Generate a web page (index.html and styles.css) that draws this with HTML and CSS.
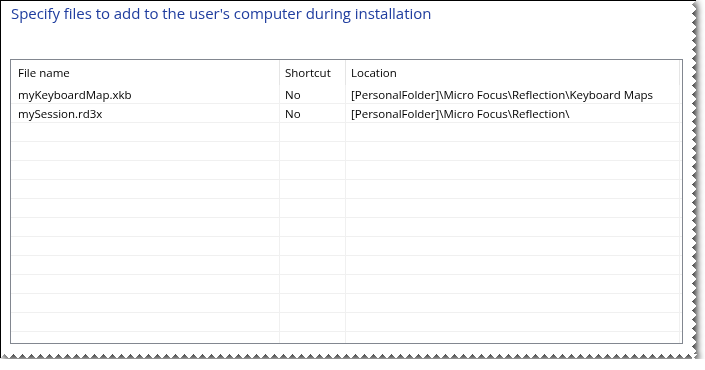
FILE: index.html
```html
<!DOCTYPE html>
<html lang="en">
<head>
    <meta charset="UTF-8">
    <meta name="viewport" content="width=device-width, initial-scale=1.0">
    <title>Installation files</title>
    <link rel="stylesheet" href="styles.css">
</head>
<body>
    <div class="sheet">
        <div class="paper">
            <h1 class="instruction">Specify files to add to the user's computer during installation</h1>
            <div class="list">
                <div class="row head">
                    <div class="cell">File name</div>
                    <div class="cell">Shortcut</div>
                    <div class="cell">Location</div>
                    <div class="cell"></div>
                </div>
                <div class="row">
                    <div class="cell">myKeyboardMap.xkb</div>
                    <div class="cell">No</div>
                    <div class="cell">[PersonalFolder]\Micro Focus\Reflection\Keyboard Maps</div>
                    <div class="cell"></div>
                </div>
                <div class="row">
                    <div class="cell">mySession.rd3x</div>
                    <div class="cell">No</div>
                    <div class="cell">[PersonalFolder]\Micro Focus\Reflection\</div>
                    <div class="cell"></div>
                </div>
                <div class="row"><div class="cell"></div><div class="cell"></div><div class="cell"></div><div class="cell"></div></div>
                <div class="row"><div class="cell"></div><div class="cell"></div><div class="cell"></div><div class="cell"></div></div>
                <div class="row"><div class="cell"></div><div class="cell"></div><div class="cell"></div><div class="cell"></div></div>
                <div class="row"><div class="cell"></div><div class="cell"></div><div class="cell"></div><div class="cell"></div></div>
                <div class="row"><div class="cell"></div><div class="cell"></div><div class="cell"></div><div class="cell"></div></div>
                <div class="row"><div class="cell"></div><div class="cell"></div><div class="cell"></div><div class="cell"></div></div>
                <div class="row"><div class="cell"></div><div class="cell"></div><div class="cell"></div><div class="cell"></div></div>
                <div class="row"><div class="cell"></div><div class="cell"></div><div class="cell"></div><div class="cell"></div></div>
                <div class="row"><div class="cell"></div><div class="cell"></div><div class="cell"></div><div class="cell"></div></div>
                <div class="row"><div class="cell"></div><div class="cell"></div><div class="cell"></div><div class="cell"></div></div>
                <div class="row"><div class="cell"></div><div class="cell"></div><div class="cell"></div><div class="cell"></div></div>
                <div class="row"><div class="cell"></div><div class="cell"></div><div class="cell"></div><div class="cell"></div></div>
            </div>
        </div>
    </div>
</body>
</html>
```

FILE: styles.css
```css
body {
    margin: 0;
    background-color: #fff;
    font-family: "Open Sans", "Noto Sans", sans-serif;
}
/* torn sheet: shadow on the wrapper, zigzag mask on the paper */
.sheet {
    width: 697px;
    height: 359px;
    filter: drop-shadow(3px 3px 3px rgba(0, 0, 0, 0.75));
}
.paper {
    box-sizing: border-box;
    width: 100%;
    height: 100%;
    background-color: #fff;
    border-top: 1px solid #000;
    border-left: 1px solid #000;
    padding-left: 9px;
    -webkit-mask:
        linear-gradient(#000 0 0) 0 0 / calc(100% - 5px) calc(100% - 5px) no-repeat,
        conic-gradient(from 45deg at 0 50%, #0000 90deg, #000 0) 100% 0 / 5px 9px repeat-y,
        conic-gradient(from 135deg at 50% 0, #0000 90deg, #000 0) 0 100% / 9px 5px repeat-x;
    mask:
        linear-gradient(#000 0 0) 0 0 / calc(100% - 5px) calc(100% - 5px) no-repeat,
        conic-gradient(from 45deg at 0 50%, #0000 90deg, #000 0) 100% 0 / 5px 9px repeat-y,
        conic-gradient(from 135deg at 50% 0, #0000 90deg, #000 0) 0 100% / 9px 5px repeat-x;
}
.instruction {
    margin: 0 0 0 1px;
    height: 58px;
    font-size: 15px;
    font-weight: normal;
    line-height: 24px;
    letter-spacing: -0.05px;
    color: #1f3d9f;
}
.list {
    width: 673px;
    height: 285px;
    box-sizing: border-box;
    border: 1px solid #828790;
    overflow: hidden;
    font-size: 11.5px;
    color: #000;
}
.row {
    display: grid;
    grid-template-columns: 269px 66px 334px 1fr;
    height: 18px;
    line-height: 19px;
    border-bottom: 1px solid #f0f0f0;
}
.row.head {
    height: 25px;
    line-height: 25px;
    border-bottom: none;
}
.cell {
    padding-left: 5px;
    border-right: 1px solid #f0f0f0;
    white-space: nowrap;
    overflow: hidden;
}
.cell:first-child {
    padding-left: 7px;
}
.cell:last-child {
    border-right: none;
}
.head .cell {
    border-right-color: #e5e5e5;
}
```
